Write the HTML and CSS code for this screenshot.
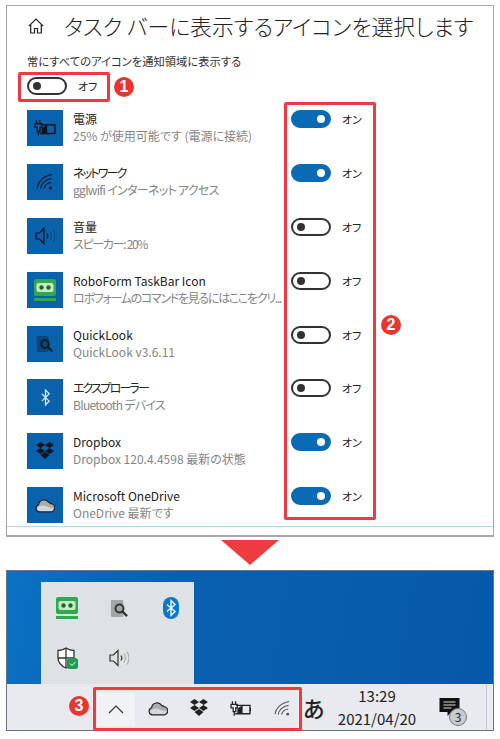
FILE: index.html
```html
<!DOCTYPE html>
<html lang="ja">
<head>
    <meta charset="UTF-8">
    <meta name="viewport" content="width=device-width, initial-scale=1.0">
    <title>タスク バーに表示するアイコンを選択します</title>
    <link rel="stylesheet" href="styles.css">
</head>
<body>
    <svg class="defs" width="0" height="0">
        <symbol id="i-power" viewBox="0 0 20 16">
            <path d="M6 5h13v8H5" fill="none" stroke="currentColor" stroke-width="1.300"/>
            <path d="M7 13V8l5-3v8z" fill="currentColor"/>
            <path d="M1 4h6v3.500H5.500V11H3V7.500H1zM2.300 1v3M5.300 1v3M4 11v4" fill="none" stroke="currentColor" stroke-width="1.200"/>
            <path d="M19 7.500h1v3h-1z" fill="currentColor"/>
        </symbol>
        <symbol id="i-wifi" viewBox="0 0 18 18">
            <g fill="none" stroke="currentColor" stroke-width="1.100">
                <path d="M1 15C2 9 7 3 16 1.500"/>
                <path d="M4.500 15.500C5 11 9 6.500 15.500 5.500"/>
                <path d="M8 15.500C8.500 13 11 10 15 9.500"/>
            </g>
            <circle cx="14.500" cy="15" r="1.500" fill="currentColor"/>
        </symbol>
        <symbol id="i-sound" viewBox="0 0 20 18">
            <path d="M1 6h3.500L9 1.500v15L4.500 12H1z" fill="none" stroke="currentColor" stroke-width="1.200"/>
            <path d="M12 6.500c1 1.500 1 3.500 0 5" fill="none" stroke="currentColor" stroke-width="1.200"/>
            <path d="M15 4.500c1.800 2.500 1.800 6.500 0 9M18 2.500c2.500 4 2.500 9 0 13" fill="none" stroke="currentColor" stroke-width="1" opacity=".35"/>
        </symbol>
        <symbol id="i-robo" viewBox="0 0 22 22">
            <path d="M2 0h18a2 2 0 0 1 2 2v13a2 2 0 0 1-2 2H2a2 2 0 0 1-2-2V2a2 2 0 0 1 2-2z" fill="#2fa84f"/>
            <rect x="2.500" y="4" width="17" height="9" rx="2" fill="#c9ecc4"/>
            <circle cx="7.500" cy="8.500" r="2.200" fill="#17692f"/>
            <circle cx="14.500" cy="8.500" r="2.200" fill="#17692f"/>
            <rect y="19" width="22" height="3" fill="#2fa84f"/>
        </symbol>
        <symbol id="i-look" viewBox="0 0 20 20">
            <rect x="1" y="1" width="13" height="18" rx="1" fill="currentColor" opacity=".35"/>
            <circle cx="10" cy="10" r="4.200" fill="none" stroke="currentColor" stroke-width="2"/>
            <path d="M13 13l5 5" stroke="currentColor" stroke-width="2.400"/>
        </symbol>
        <symbol id="i-bt" viewBox="0 0 12 18">
            <path d="M2 5l8 8-4 4V1l4 4-8 8" fill="none" stroke="currentColor" stroke-width="1.400"/>
        </symbol>
        <symbol id="i-dropbox" viewBox="0 0 20 18">
            <path d="M5.500 0L10 3 5.500 6 1 3zM14.500 0L19 3l-4.500 3L10 3zM5.500 6L10 9l-4.500 3L1 9zM14.500 6L19 9l-4.500 3L10 9zM5.500 13l4.500-3 4.500 3L10 17z" fill="currentColor"/>
        </symbol>
        <symbol id="i-cloud" viewBox="0 0 22 16">
            <path d="M5 15a4 4 0 0 1-1-7.800A6 6 0 0 1 15 4.500a4.500 4.500 0 0 1 2.500 1.500A4.500 4.500 0 0 1 17 15z" fill="#a9acae"/>
            <path d="M1.500 11.500c3-3 6-4 10-3 2 .5 5 2 9 2.500-.5 2.500-2 4-3.500 4H5c-2 0-3-1.500-3.500-3.500z" fill="#d4d6d7"/>
            <path d="M5 15a4 4 0 0 1-1-7.800A6 6 0 0 1 15 4.500a4.500 4.500 0 0 1 2.500 1.500A4.500 4.500 0 0 1 17 15z" fill="none" stroke="#222" stroke-width="1.300"/>
        </symbol>
    </svg>

    <div class="settings">
        <header class="settings-head">
            <svg class="home" viewBox="0 0 16 16" width="16" height="16">
                <path d="M.8 8.200L8 1l7.200 7.200M2.700 6.500V15h3.800v-4.500h3V15h3.800V6.500" fill="none" stroke="#222" stroke-width="1.200"/>
            </svg>
            <h1>タスク バーに表示するアイコンを選択します</h1>
        </header>
        <p class="always-label">常にすべてのアイコンを通知領域に表示する</p>
        <div class="switch-line">
            <span class="switch"></span>
            <span class="switch-text">オフ</span>
        </div>

        <ul class="tray-list">
            <li class="tray-row">
                <span class="tile"><svg width="22" height="18"><use href="#i-power"/></svg></span>
                <div class="tray-info"><b>電源</b><small>25% が使用可能です (電源に接続)</small></div>
                <span class="switch on"></span><span class="switch-text">オン</span>
            </li>
            <li class="tray-row">
                <span class="tile"><svg width="18" height="18"><use href="#i-wifi"/></svg></span>
                <div class="tray-info"><b class="kana-3">ネットワーク</b><small class="kana-1">gglwifi インターネット アクセス</small></div>
                <span class="switch on"></span><span class="switch-text">オン</span>
            </li>
            <li class="tray-row">
                <span class="tile"><svg width="20" height="18"><use href="#i-sound"/></svg></span>
                <div class="tray-info"><b>音量</b><small class="kana-2">スピーカー: 20%</small></div>
                <span class="switch"></span><span class="switch-text">オフ</span>
            </li>
            <li class="tray-row">
                <span class="tile"><svg width="22" height="22"><use href="#i-robo"/></svg></span>
                <div class="tray-info"><b>RoboForm TaskBar Icon</b><small class="kana-2">ロボフォームのコマンドを見るにはここをクリ...</small></div>
                <span class="switch"></span><span class="switch-text">オフ</span>
            </li>
            <li class="tray-row">
                <span class="tile"><svg width="18" height="18"><use href="#i-look"/></svg></span>
                <div class="tray-info"><b>QuickLook</b><small>QuickLook v3.6.11</small></div>
                <span class="switch"></span><span class="switch-text">オフ</span>
            </li>
            <li class="tray-row">
                <span class="tile tile-light"><svg width="11" height="17"><use href="#i-bt"/></svg></span>
                <div class="tray-info"><b class="kana-3">エクスプローラー</b><small class="kana-1">Bluetooth デバイス</small></div>
                <span class="switch"></span><span class="switch-text">オフ</span>
            </li>
            <li class="tray-row">
                <span class="tile"><svg width="20" height="18"><use href="#i-dropbox"/></svg></span>
                <div class="tray-info"><b>Dropbox</b><small>Dropbox 120.4.4598 最新の状態</small></div>
                <span class="switch on"></span><span class="switch-text">オン</span>
            </li>
            <li class="tray-row">
                <span class="tile"><svg width="20" height="15"><use href="#i-cloud"/></svg></span>
                <div class="tray-info"><b>Microsoft OneDrive</b><small>OneDrive 最新です</small></div>
                <span class="switch on"></span><span class="switch-text">オン</span>
            </li>
        </ul>

        <div class="mark mark-one"></div>
        <span class="badge badge-one">1</span>
        <div class="mark mark-two"></div>
        <span class="badge badge-two">2</span>
    </div>

    <div class="arrow"></div>

    <div class="desktop">
        <div class="wallpaper">
            <div class="overflow-tray">
                <svg width="22" height="22"><use href="#i-robo"/></svg>
                <svg class="tray-look" width="19" height="19"><use href="#i-look"/></svg>
                <svg class="bt-pill" viewBox="0 0 16 22" width="16" height="22">
                    <rect width="16" height="22" rx="8" fill="#0b78d0"/>
                    <path d="M4 7.500l8 7-4 4v-15l4 4-8 7" fill="none" stroke="#fff" stroke-width="1.300"/>
                </svg>
                <svg viewBox="0 0 22 22" width="22" height="22">
                    <path d="M10 1c3 2 5 2.500 8 2.500V11c0 4.500-3.500 8-8 10-4.500-2-8-5.500-8-10V3.500C5 3.500 7 3 10 1z" fill="#fff" stroke="#333" stroke-width="1.300"/>
                    <path d="M10 1v20M2 11h16" stroke="#333" stroke-width="1.300"/>
                    <rect x="11" y="11" width="11" height="11" rx="2.500" fill="#1f9d55"/>
                    <path d="M14 16.500l2 2 3.500-3.500" fill="none" stroke="#fff" stroke-width="1"/>
                </svg>
                <svg class="tray-sound" width="20" height="18"><use href="#i-sound"/></svg>
            </div>
        </div>
        <div class="taskbar">
            <div class="tray-icons">
                <span class="chevron">
                    <svg viewBox="0 0 16 9" width="16" height="9"><path d="M1 8l7-7 7 7" fill="none" stroke="#333" stroke-width="1.200"/></svg>
                </span>
                <svg width="20" height="15"><use href="#i-cloud"/></svg>
                <svg width="20" height="18"><use href="#i-dropbox"/></svg>
                <svg width="21" height="17"><use href="#i-power"/></svg>
                <svg class="tray-wifi" width="17" height="17"><use href="#i-wifi"/></svg>
            </div>
            <span class="ime">あ</span>
            <div class="clock"><span>13:29</span><span>2021/04/20</span></div>
            <div class="notify">
                <svg viewBox="0 0 20 19" width="21" height="19">
                    <path d="M0 0h20v14H12l-4 4v-4H0z" fill="#111"/>
                    <path d="M4 4h12M4 7h12M4 10h8" stroke="#ddd" stroke-width="1"/>
                </svg>
                <span class="notify-count">3</span>
            </div>
            <div class="mark mark-three"></div>
            <span class="badge badge-three">3</span>
        </div>
    </div>
</body>
</html>
```

FILE: styles.css
```css
* {
    box-sizing: border-box;
}

body {
    margin: 0;
    padding: 5px 6px 0;
    background-color: #fff;
    color: #222;
    font-family: "Noto Sans CJK JP", "Noto Sans", sans-serif;
    font-feature-settings: "palt";
}

.defs {
    position: absolute;
}

.settings {
    position: relative;
    height: 532px;
    padding: 5px 0 0 20px;
    border: 1px solid #a9a9a9;
    border-bottom-width: 2px;
    overflow: hidden;
}

/* the thin line along the bottom of the window */
.settings::after {
    content: "";
    position: absolute;
    left: 0;
    right: 0;
    bottom: 8px;
    height: 1.500px;
    background-color: #a8dde0;
}

.settings-head {
    display: flex;
    align-items: center;
    height: 30px;
    padding-left: 1px;
}

.home {
    flex: none;
}

.settings-head h1 {
    margin: 0 0 0 20px;
    font-size: 21.800px;
    font-weight: 300;
    line-height: 30px;
    white-space: nowrap;
}

.always-label {
    margin: 12px 0 0;
    font-size: 11.300px;
    line-height: 16px;
    color: #333;
}

.switch-line {
    display: flex;
    align-items: center;
    gap: 11px;
    height: 18px;
    margin-top: 8px;
}

.switch {
    position: relative;
    flex: none;
    width: 40px;
    height: 18px;
    border: 2px solid #333;
    border-radius: 9px;
    background-color: #fff;
}

.switch::before {
    content: "";
    position: absolute;
    top: 3px;
    left: 4px;
    width: 8px;
    height: 8px;
    border-radius: 50%;
    background-color: #333;
}

.switch.on {
    border-color: #0a6ab4;
    background-color: #0a6ab4;
}

.switch.on::before {
    left: auto;
    right: 4px;
    background-color: #fff;
}

.switch-text {
    font-size: 11px;
    line-height: 18px;
}

.tray-list {
    margin: 15px 0 0;
    padding: 0;
    list-style: none;
}

.tray-row {
    display: flex;
    align-items: flex-start;
    height: 53.900px;
}

.tile {
    display: flex;
    flex: none;
    align-items: center;
    justify-content: center;
    width: 36px;
    height: 36px;
    background-color: #0a62ac;
    color: #0c1420;
}

.tile-light {
    color: #dbeeff;
}

.tray-info {
    flex: none;
    width: 228px;
    padding-left: 10px;
}

.tray-info b,
.tray-info small {
    display: block;
    font-size: 12px;
    font-weight: 400;
    line-height: 17px;
    white-space: nowrap;
}

.tray-info small {
    color: #858585;
}

/* katakana runs narrower in the original UI font */
.tray-info .kana-1 {
    letter-spacing: -0.7px;
}

.tray-info .kana-2 {
    letter-spacing: -1.300px;
}

.tray-info .kana-3 {
    letter-spacing: -1.800px;
}

.tray-row .switch-text {
    margin-left: 11px;
}

/* red call-outs laid over the screenshot */
.mark {
    position: absolute;
    border: 3px solid #ee3b40;
    border-radius: 2px;
}

.mark-one {
    top: 66px;
    left: 11px;
    width: 92px;
    height: 30px;
}

.mark-two {
    top: 96px;
    left: 277px;
    width: 92px;
    height: 418px;
}

.mark-three {
    top: 3px;
    left: 86px;
    width: 209px;
    height: 44px;
}

.badge {
    position: absolute;
    width: 20px;
    height: 20px;
    border-radius: 50%;
    background-color: #e8362f;
    color: #fff;
    font-family: "Liberation Sans", sans-serif;
    font-size: 16px;
    font-weight: 700;
    line-height: 20px;
    text-align: center;
}

.badge-one {
    top: 71px;
    left: 107px;
}

.badge-two {
    top: 309px;
    left: 374px;
}

.badge-three {
    top: 12px;
    left: 62px;
}

.arrow {
    width: 0;
    height: 0;
    margin: 3px auto 5px;
    border-top: 25px solid #ee3b40;
    border-left: 29px solid transparent;
    border-right: 29px solid transparent;
}

.desktop {
    height: 161px;
    border: 1px solid #6b7480;
}

.wallpaper {
    height: 113px;
    padding: 11px 0 0 34px;
    background: linear-gradient(100deg, #0a72c4 0%, #0a60b0 30%, #0659a8 100%);
}

.overflow-tray {
    display: grid;
    grid-template-columns: repeat(3, 52px);
    grid-auto-rows: 50px;
    align-items: start;
    justify-items: center;
    width: 153px;
    height: 102px;
    padding: 15px 0 0 0;
    background-color: #dfe2e5;
    color: #333;
}

.tray-look {
    margin-top: 2px;
}

.tray-sound {
    margin-top: 2px;
}

.taskbar {
    position: relative;
    display: flex;
    align-items: center;
    height: 46px;
    padding-left: 93px;
    background-color: #e8eaef;
    color: #222;
}

.tray-icons {
    display: flex;
    align-items: center;
    gap: 21px;
    width: 205px;
    height: 46px;
    padding-top: 2px;
}

.tray-icons .tray-wifi {
    margin-left: 2px;
    color: #555;
}

.chevron {
    display: flex;
    align-items: center;
    justify-content: center;
    width: 38px;
    height: 33px;
    margin: 2px -8px 0 -3px;
    background-color: #f1f2f4;
}

.ime {
    width: 24px;
    margin-left: -2px;
    font-size: 22px;
    font-weight: 500;
    line-height: 46px;
}

.clock {
    display: flex;
    flex-direction: column;
    align-items: center;
    gap: 3px;
    width: 84px;
    margin-left: 8px;
    font-size: 15px;
    line-height: 20px;
}

.notify {
    position: relative;
    width: 26px;
    height: 30px;
    margin: 0 0 -2px 20px;
    padding-top: 5px;
}

.notify-count {
    position: absolute;
    top: 15px;
    left: 10px;
    width: 18px;
    height: 18px;
    border: 1px solid #777;
    border-radius: 50%;
    background-color: #c9cbce;
    font-size: 12px;
    line-height: 16px;
    text-align: center;
}

.taskbar::after {
    content: "";
    position: absolute;
    top: 0;
    bottom: 0;
    right: 6px;
    width: 1px;
    background-color: #c9ccd0;
}
```
